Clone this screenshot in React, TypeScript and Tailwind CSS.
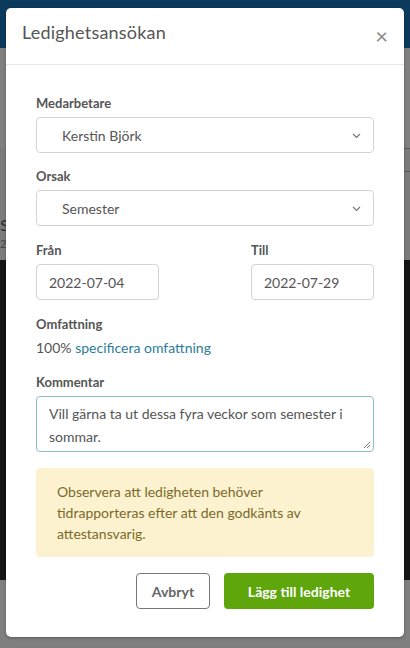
import React from "react";

const font = { fontFamily: "Lato, 'Noto Sans', sans-serif" };

function Chevron() {
  return (
    <svg width="9" height="6" viewBox="0 0 9 6" className="absolute right-[12px] top-[15px]">
      <path d="M1 1l3.5 3.5L8 1" fill="none" stroke="#777" strokeWidth="1.2" />
    </svg>
  );
}

export default function App() {
  return (
    <div className="relative w-[410px] h-[648px] overflow-hidden bg-[#7d7d7d]" style={font}>
      {/* background page */}
      <div className="flex flex-col h-full">
        <div className="h-[48px] bg-[#0c3a5c]" />
        <div className="h-[100px] bg-[#808080]" />
        <div className="h-[112px] bg-[#7b7b7b] flex items-start justify-end">
          <div className="w-[10px] h-[24px] border border-r-0 border-[#555] rounded-l-[3px]" />
        </div>
        <div className="h-[320px] bg-[#151515]" />
        <div className="flex-1 bg-[#7f7f7f]" />
      </div>
      <div className="absolute left-0 top-[206px] text-[22px] text-[#333]">s</div>
      <div className="absolute left-0 top-[236px] text-[11px] text-[#444]">2</div>

      {/* modal */}
      <div className="absolute left-[6px] top-[8px] w-[398px] h-[629px] bg-white rounded-[5px] shadow-[0_1px_3px_rgba(0,0,0,0.3)] flex flex-col">
        <div className="h-[57px] border-b border-[#e6e6e6] flex items-start justify-between pl-[16px] pr-[16px] pt-[13px]">
          <span className="text-[18px] text-[#555] tracking-[0.2px] leading-[22px]">Ledighetsansökan</span>
          <span className="text-[22px] text-[#888] leading-none mt-[4px]">×</span>
        </div>
        <div className="flex flex-col px-[30px] pt-[30px]">
          <label className="text-[13px] font-bold text-[#555] leading-[16px]">Medarbetare</label>
          <div className="relative mt-[6px] h-[36px] border border-[#d4d4d4] rounded-[4px] flex items-center pl-[25px] text-[14px] text-[#555]">
            Kerstin Björk
            <Chevron />
          </div>
          <label className="mt-[15px] text-[13px] font-bold text-[#555] leading-[16px]">Orsak</label>
          <div className="relative mt-[6px] h-[36px] border border-[#d4d4d4] rounded-[4px] flex items-center pl-[25px] text-[14px] text-[#555]">
            Semester
            <Chevron />
          </div>
          <div className="mt-[16px] flex justify-between">
            <div className="flex flex-col w-[123px]">
              <label className="text-[13px] font-bold text-[#555] leading-[16px]">Från</label>
              <div className="mt-[6px] h-[36px] border border-[#d4d4d4] rounded-[4px] flex items-center pl-[12px] text-[14px] text-[#555]">
                2022-07-04
              </div>
            </div>
            <div className="flex flex-col w-[123px]">
              <label className="text-[13px] font-bold text-[#555] leading-[16px]">Till</label>
              <div className="mt-[6px] h-[36px] border border-[#d4d4d4] rounded-[4px] flex items-center pl-[12px] text-[14px] text-[#555]">
                2022-07-29
              </div>
            </div>
          </div>
          <label className="mt-[16px] text-[13px] font-bold text-[#555] leading-[16px]">Omfattning</label>
          <div className="mt-[7px] text-[14px] text-[#555] leading-[18px]">
            100% <span className="text-[#2b7d98]">specificera omfattning</span>
          </div>
          <label className="mt-[17px] text-[13px] font-bold text-[#555] leading-[16px]">Kommentar</label>
          <div className="relative mt-[6px] h-[56px] border border-[#8cbcd0] rounded-[4px] pl-[12px] pr-[14px] pt-[5px] text-[14px] text-[#555] leading-[23px]">
            Vill gärna ta ut dessa fyra veckor som semester i sommar.
            <svg width="8" height="8" viewBox="0 0 8 8" className="absolute right-[2px] bottom-[2px]">
              <path d="M7 1L1 7M7 4L4 7" stroke="#777" strokeWidth="1" />
            </svg>
          </div>
          <div className="mt-[16px] h-[89px] bg-[#fcf2cf] rounded-[4px] pl-[21px] pr-[16px] pt-[13px] text-[14px] text-[#7b6a2b] leading-[21px]">
            <p className="w-[250px]">
              Observera att ledigheten behöver tidrapporteras efter att den godkänts av attestansvarig.
            </p>
          </div>
          <div className="mt-[16px] flex justify-end gap-[14px]">
            <button className="w-[74px] h-[36px] border border-[#777] rounded-[4px] text-[14px] font-bold text-[#666] bg-white">
              Avbryt
            </button>
            <button className="w-[150px] h-[36px] rounded-[4px] text-[14px] font-bold text-white bg-[#5ea60b]">
              Lägg till ledighet
            </button>
          </div>
        </div>
      </div>
    </div>
  );
}
